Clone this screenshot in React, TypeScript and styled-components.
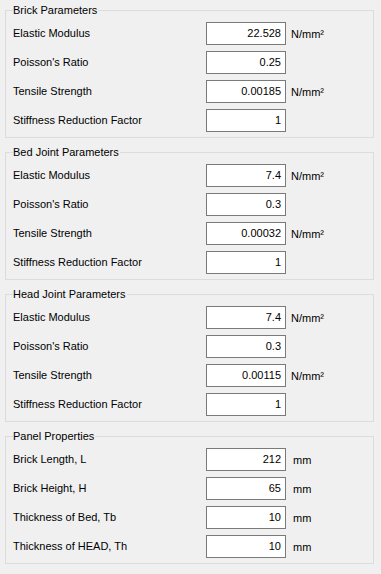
import React from 'react';
import styled, { createGlobalStyle } from 'styled-components';

const GlobalStyle = createGlobalStyle`
  html, body { margin: 0; padding: 0; background: #f0f0f0; }
  body {
    font-family: "Liberation Sans", Arial, sans-serif;
    font-size: 11px;
    color: #000;
  }
`;

const Page = styled.div`
  width: 381px;
  height: 574px;
  box-sizing: border-box;
  padding: 4px 7px 0 5px;
  display: flex;
  flex-direction: column;
  gap: 8px;
`;

const Group = styled.fieldset`
  margin: 0;
  padding: 5px 0 5px 7px;
  border: 1px solid #dcdcdc;
  min-width: 0;
`;

const Legend = styled.legend`
  margin: 0;
  padding: 0 1px 0 0;
  height: 13px;
  line-height: 13px;
  font-size: 11px;
`;

const Rows = styled.div`
  display: flex;
  flex-direction: column;
  gap: 6px;
`;

const Row = styled.div`
  display: grid;
  grid-template-columns: 193px 80px auto;
  align-items: center;
  height: 23px;
`;

const Label = styled.span`
  white-space: nowrap;
  line-height: 13px;
`;

const ValueBox = styled.div`
  box-sizing: border-box;
  height: 23px;
  border: 1px solid #7a7a7a;
  background: #fff;
  text-align: right;
  padding: 0 4px 0 2px;
  line-height: 20px;
`;

const Unit = styled.span<{ $offset: number }>`
  margin-left: ${(p) => p.$offset}px;
  padding-top: 2px;
  white-space: nowrap;
  line-height: 13px;
`;

type Field = { label: string; value: string; unit?: string };
type Section = { title: string; fields: Field[] };

const NMM = 'N/mm²';

const sections: Section[] = [
  {
    title: 'Brick Parameters',
    fields: [
      { label: 'Elastic Modulus', value: '22.528', unit: NMM },
      { label: "Poisson's Ratio", value: '0.25' },
      { label: 'Tensile Strength', value: '0.00185', unit: NMM },
      { label: 'Stiffness Reduction Factor', value: '1' },
    ],
  },
  {
    title: 'Bed Joint Parameters',
    fields: [
      { label: 'Elastic Modulus', value: '7.4', unit: NMM },
      { label: "Poisson's Ratio", value: '0.3' },
      { label: 'Tensile Strength', value: '0.00032', unit: NMM },
      { label: 'Stiffness Reduction Factor', value: '1' },
    ],
  },
  {
    title: 'Head Joint Parameters',
    fields: [
      { label: 'Elastic Modulus', value: '7.4', unit: NMM },
      { label: "Poisson's Ratio", value: '0.3' },
      { label: 'Tensile Strength', value: '0.00115', unit: NMM },
      { label: 'Stiffness Reduction Factor', value: '1' },
    ],
  },
  {
    title: 'Panel Properties',
    fields: [
      { label: 'Brick Length, L', value: '212', unit: 'mm' },
      { label: 'Brick Height, H', value: '65', unit: 'mm' },
      { label: 'Thickness of Bed, Tb', value: '10', unit: 'mm' },
      { label: 'Thickness of HEAD, Th', value: '10', unit: 'mm' },
    ],
  },
];

export default function App() {
  return (
    <>
      <GlobalStyle />
      <Page>
        {sections.map((s) => (
          <Group key={s.title}>
            <Legend>{s.title}</Legend>
            <Rows>
              {s.fields.map((f) => (
                <Row key={f.label}>
                  <Label>{f.label}</Label>
                  <ValueBox>{f.value}</ValueBox>
                  {f.unit ? <Unit $offset={f.unit === 'mm' ? 7 : 5}>{f.unit}</Unit> : <span />}
                </Row>
              ))}
            </Rows>
          </Group>
        ))}
      </Page>
    </>
  );
}
